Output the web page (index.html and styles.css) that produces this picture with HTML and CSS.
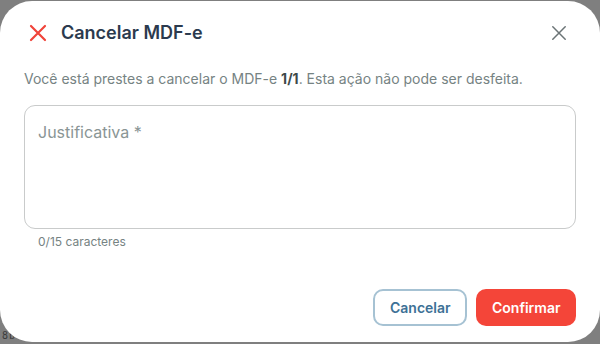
FILE: index.html
```html
<!DOCTYPE html>
<html lang="pt-BR">
<head>
<meta charset="utf-8">
<title>Cancelar MDF-e</title>
<link rel="stylesheet" href="styles.css">
</head>
<body>
<div class="page">
  <span class="page-text">8b</span>
</div>
<div class="overlay">
  <div class="modal" role="dialog" aria-labelledby="modal-title">
    <div class="modal-header">
      <svg class="icon-danger" viewBox="0 0 18 18" width="18" height="18" aria-hidden="true">
        <path d="M2 2 L16 16 M16 2 L2 16" stroke="#f0443a" stroke-width="2.2" stroke-linecap="round" fill="none"/>
      </svg>
      <h2 id="modal-title" class="modal-title">Cancelar MDF-e</h2>
      <button class="close-btn" aria-label="Fechar">
        <svg viewBox="0 0 14 14" width="14" height="14" aria-hidden="true">
          <path d="M0.8 0.8 L13.2 13.2 M13.2 0.8 L0.8 13.2" stroke="#6b7476" stroke-width="1.5" stroke-linecap="round" fill="none"/>
        </svg>
      </button>
    </div>
    <p class="modal-desc">Você está prestes a cancelar o MDF-e <strong>1/1</strong>. Esta ação não pode ser desfeita.</p>
    <textarea class="field" placeholder="Justificativa *"></textarea>
    <div class="counter">0/15 caracteres</div>
    <div class="modal-footer">
      <button class="btn btn-outline">Cancelar</button>
      <button class="btn btn-danger">Confirmar</button>
    </div>
  </div>
</div>
</body>
</html>
```

FILE: styles.css
```css
* { box-sizing: border-box; }
html, body {
  margin: 0;
  padding: 0;
  width: 600px;
  height: 344px;
  overflow: hidden;
}
body {
  background: #7f7f7f;
  font-family: Inter, "Noto Sans", sans-serif;
}
.page {
  height: 344px;
  display: flex;
  align-items: flex-end;
  padding: 0 0 3px 2px;
}
.page-text {
  font-family: "DejaVu Sans Mono", monospace;
  font-size: 10px;
  color: #3c3c3c;
  letter-spacing: 1px;
}
.overlay {
  position: fixed;
  top: 1px;
  left: 0;
  width: 600px;
  height: 341px;
}
.modal {
  width: 600px;
  height: 341px;
  background: #ffffff;
  border-radius: 32px;
  padding: 20px 24px 16px 24px;
  display: flex;
  flex-direction: column;
}
.modal-header {
  display: flex;
  align-items: center;
  height: 24px;
}
.icon-danger {
  margin-left: 5px;
  flex: none;
}
.modal-title {
  margin: 0 0 0 14px;
  font-size: 18px;
  font-weight: 600;
  color: #2b3a4e;
  flex: 1;
  line-height: 24px;
}
.close-btn {
  border: 0;
  background: transparent;
  padding: 0;
  margin-right: 10px;
  width: 14px;
  height: 14px;
  display: flex;
}
.modal-desc {
  margin: 24px 0 0 0;
  font-size: 14px;
  line-height: 20px;
  color: #768383;
}
.modal-desc strong {
  font-weight: 700;
  color: #3e4a4a;
}
.field {
  margin-top: 16px;
  width: 552px;
  height: 124px;
  border: 1px solid #c9cbcb;
  border-radius: 11px;
  padding: 14px 13px 13px 13px;
  font-family: Inter, "Noto Sans", sans-serif;
  font-size: 16px;
  line-height: 24px;
  resize: none;
  outline: none;
  color: #333;
}
.field::placeholder {
  color: #8a9595;
}
.counter {
  margin-top: 5px;
  padding-left: 14px;
  font-size: 12px;
  line-height: 16px;
  color: #768383;
}
.modal-footer {
  margin-top: auto;
  display: flex;
  justify-content: flex-end;
  gap: 9px;
}
.btn {
  height: 37px;
  border-radius: 10px;
  font-family: Inter, "Noto Sans", sans-serif;
  font-size: 14px;
  font-weight: 600;
  cursor: pointer;
}
.btn-outline {
  background: #ffffff;
  border: 2px solid #a6c2d3;
  color: #3d7196;
  padding: 0 15px;
  width: 94px;
}
.btn-danger {
  background: #f44539;
  border: 0;
  color: #ffffff;
  padding: 0 16px;
  width: 100px;
}
```
